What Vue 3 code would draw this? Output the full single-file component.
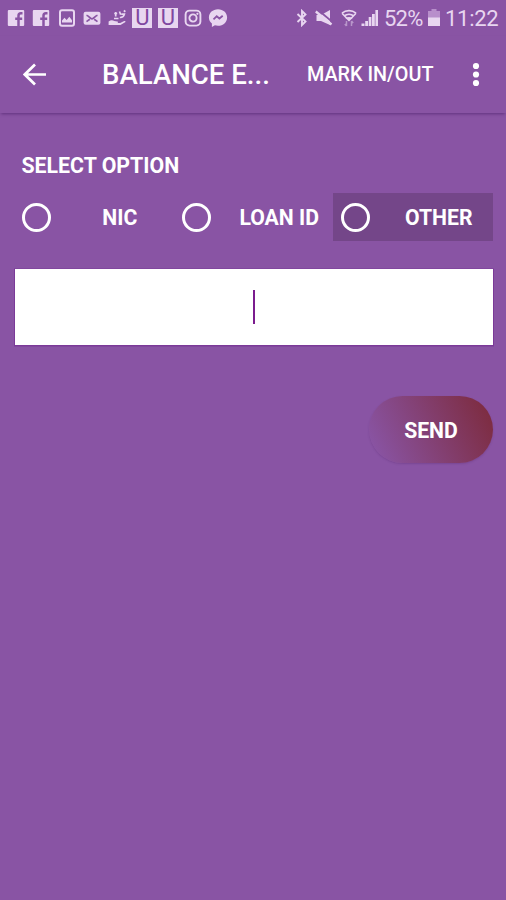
<template>
  <div class="screen">
    <!-- status bar -->
    <div class="status-bar">
      <div class="notifications">
        <svg v-for="n in 2" :key="'fb' + n" class="status-icon" viewBox="0 0 20 20">
          <rect x="1.8" y="2" width="16.4" height="16" rx="1" fill="currentColor" />
          <path class="cut" d="M16.5 5.2H15c-1.900 0-2.500.8-2.500 2.500V18M9.200 10.800h7" stroke-width="2.5" />
        </svg>
        <svg class="status-icon" viewBox="0 0 20 20">
          <rect x="3" y="2.2" width="14" height="15.6" rx="2" class="line" stroke-width="2" />
          <path d="M5 14.500v-2l2.500-2.700 2.200 2.200 2.600-3.200 2.700 3.400v2.300z" fill="currentColor" />
        </svg>
        <svg class="status-icon" viewBox="0 0 20 20">
          <rect x="1.6" y="3.8" width="16.8" height="13" rx="2" fill="currentColor" />
          <path class="cut" d="M4.500 7.200c2.500.8 3.500 3.600 5.500 3.600s3-2.800 5.500-3.600M4.500 13.600l3.300-2.400M15.500 13.600l-3.300-2.400" stroke-width="1.7" />
        </svg>
        <svg class="status-icon" viewBox="0 0 20 20">
          <path d="M1.600 13.500c2.200-1.600 4-1.600 5.600-.4l3.200.4c1 .2.8 1.300-.2 1.400l3 .1 4-1.900c1.200-.5 1.800.5.9 1.200L13.500 17H1.600z" fill="currentColor" />
          <path class="line" d="M7.200 5.500h3M8.700 4v4.500M7 10.500h4.500M12.500 3.500l1.200 3.200M16.800 2.500l1.600 1.200M12.800 9.500c2.500.2 4-1 4.600-3.400h-3" stroke-width="1.7" />
        </svg>
        <span v-for="n in 2" :key="'u' + n" class="u-badge">U</span>
        <svg class="status-icon" viewBox="0 0 20 20">
          <rect x="2.6" y="2.6" width="14.8" height="15" rx="4" class="line" stroke-width="1.9" />
          <circle cx="10" cy="10" r="3.6" class="line" stroke-width="1.9" />
          <circle cx="14.4" cy="5.8" r="1.1" fill="currentColor" />
        </svg>
        <svg class="status-icon" viewBox="0 0 20 20">
          <path d="M10 1.200C4.800 1.200.9 4.800.9 9.400c0 2.500 1.200 4.600 3 6V19l3-1.700c1 .3 2 .4 3.100.4 5.200 0 9.100-3.700 9.100-8.300S15.200 1.200 10 1.200z" fill="currentColor" />
          <path class="cut" d="m5.500 11.300 3.200-3 2.700 2.200 3.300-2.700" stroke-width="1.8" />
        </svg>
      </div>

      <div class="system">
        <svg class="bluetooth" viewBox="0 0 12 18">
          <path class="line" d="m1.500 5 8 7.500L6 16V2l3.500 3.500-8 7.500" stroke-width="1.9" />
        </svg>
        <svg class="mute" viewBox="0 0 18 18">
          <path d="M1.500 6h4.500L15 1v15l-9-4H1.500z" fill="currentColor" />
          <path class="cut" d="M2.500.5 17.500 13" stroke-width="1.8" />
          <path class="line" d="m.8 2.500 15.700 13" stroke-width="2.3" />
        </svg>
        <svg class="wifi" viewBox="0 0 16 18">
          <path class="line" d="M1 4.200C5 .7 11 .7 15 4.200M3.200 7c2.800-2.200 6.800-2.200 9.600 0M1 4.200l5 5.300M15 4.200l-5 5.300" stroke-width="1.6" />
          <path d="m4.500 9 3.500 3.500L11.500 9C9.500 7.800 6.500 7.800 4.500 9z" fill="currentColor" />
          <path class="line faint" d="M5.500 12v5M3.800 15l1.700 2M10.500 17v-5M12.200 14l-1.700-2" stroke-width="1.5" />
        </svg>
        <svg class="signal" viewBox="0 0 18 18">
          <path d="M.5 17v-2.500h3V17zM4.200 17v-5H7v5zM7.700 17V8h2.700v9zM11 17V5h2.800v12zM14.400 17V1H17v16z" fill="currentColor" />
        </svg>
        <span class="percent">52%</span>
        <svg class="battery" viewBox="0 0 12 18">
          <path class="empty" d="M3.500 0h5v2H12v7H0V2h3.500z" />
          <path d="M0 8.500h12V17H0z" fill="currentColor" />
        </svg>
        <span class="clock">11:22</span>
      </div>
    </div>

    <!-- toolbar -->
    <header class="toolbar">
      <button class="back" aria-label="Back">
        <svg viewBox="0 0 24 24">
          <path d="M12 1.500 1.800 11.500 12 21.500M1.800 11.500H23" fill="none" stroke="currentColor" stroke-width="2.7" />
        </svg>
      </button>
      <h1 class="title">BALANCE E...</h1>
      <button class="mark">MARK IN/OUT</button>
      <button class="more" aria-label="More options">
        <svg viewBox="0 0 8 26">
          <circle cx="4" cy="4" r="3.1" />
          <circle cx="4" cy="12.500" r="3.1" />
          <circle cx="4" cy="21" r="3.1" />
        </svg>
      </button>
    </header>

    <main class="content">
      <h2 class="label">SELECT OPTION</h2>
      <div class="options">
        <label
          v-for="option in options"
          :key="option.id"
          class="option"
          :class="{ pressed: option.id === pressed }"
          @click="pressed = option.id"
        >
          <span class="radio"></span>
          <span class="option-text">{{ option.text }}</span>
        </label>
      </div>
      <div class="field"><span class="caret"></span></div>
      <button class="send">SEND</button>
    </main>
  </div>
</template>

<script setup>
import { ref } from 'vue';

const options = [
  { id: 'nic', text: 'NIC' },
  { id: 'loan', text: 'LOAN ID' },
  { id: 'other', text: 'OTHER' }
];

const pressed = ref('other');
</script>

<style>
body {
  background: #8954a4;
}
</style>

<style scoped>
.screen {
  width: 506px;
  height: 900px;
  overflow: hidden;
  background: #8954a4;
  color: #fff;
  font-family: Roboto, "Liberation Sans", sans-serif;
}

button {
  padding: 0;
  border: 0;
  background: none;
  color: inherit;
  font-family: inherit;
}

svg {
  display: block;
  flex: none;
}

.status-bar {
  display: flex;
  justify-content: space-between;
  align-items: center;
  height: 36px;
  padding: 0 8px 0 6px;
  color: #e8d6f0;
}

.notifications {
  display: flex;
  align-items: center;
  gap: 5.3px;
}

.status-icon {
  width: 20px;
  height: 20px;
}

.line {
  fill: none;
  stroke: currentColor;
}

.cut {
  fill: none;
  stroke: #8954a4;
}

.faint {
  opacity: 0.5;
}

.u-badge {
  width: 20px;
  height: 20px;
  background: #e8d6f0;
  color: #8046a0;
  text-align: center;
  font-size: 22px;
  line-height: 20px;
}

.system {
  display: flex;
  align-items: center;
}

.bluetooth {
  width: 12px;
  height: 18px;
  margin-right: 7px;
}

.mute {
  width: 18px;
  height: 18px;
  margin-right: 8px;
}

.wifi {
  width: 16px;
  height: 18px;
  margin-right: 4px;
}

.signal {
  width: 18px;
  height: 18px;
  margin-right: 5px;
}

.percent,
.clock {
  padding-top: 1px;
  font-size: 22px;
  line-height: 36px;
  white-space: nowrap;
}

.percent {
  width: 39px;
  margin-right: 5px;
  letter-spacing: -0.8px;
}

.battery {
  width: 12px;
  height: 18px;
  margin-right: 5px;
}

.empty {
  fill: #b88fcb;
}

.clock {
  width: 53px;
  letter-spacing: -0.3px;
}

.toolbar {
  display: flex;
  align-items: center;
  height: 77px;
  padding: 0 26px 0 23px;
  box-shadow: 0 2px 3px -1px rgba(75, 30, 105, 0.65);
}

.back svg {
  width: 24px;
  height: 24px;
}

.title {
  width: 171px;
  margin: 1px 34px 0 55px;
  font-size: 27.6px;
  font-weight: 500;
  line-height: 32px;
  white-space: nowrap;
}

.mark {
  width: 128px;
  font-size: 19.8px;
  font-weight: 500;
  text-align: left;
  white-space: nowrap;
}

.more {
  margin-left: auto;
}

.more svg {
  width: 8px;
  height: 26px;
  fill: currentColor;
}

.content {
  display: flex;
  flex-direction: column;
  padding: 40px 13px 0 14px;
}

.label {
  margin: 0 0 0 7.5px;
  font-size: 21.3px;
  font-weight: 700;
  line-height: 26px;
}

.options {
  display: grid;
  grid-template-columns: repeat(3, 159.5px);
  height: 48px;
  margin-top: 14px;
}

.option {
  display: flex;
  align-items: center;
  padding-left: 8px;
}

.pressed {
  background: #744689;
}

.radio {
  flex: none;
  box-sizing: border-box;
  width: 29px;
  height: 29px;
  border: 3px solid #fff;
  border-radius: 50%;
}

.option-text {
  flex: 1;
  padding: 1px 0 0 15px;
  text-align: center;
  font-size: 21.2px;
  font-weight: 700;
  white-space: nowrap;
}

.field {
  display: flex;
  align-items: center;
  justify-content: center;
  height: 76px;
  margin: 28px 0 0 1px;
  background: #fff;
  box-shadow: 0 0.5px 0 1px #7b3a98;
}

.caret {
  width: 2px;
  height: 34px;
  background: #7b1c8e;
}

.send {
  align-self: flex-end;
  width: 124px;
  height: 67px;
  margin-top: 51px;
  padding-top: 1px;
  border-radius: 34px;
  background: linear-gradient(65deg, #8954a4 6%, #7d2b3e 96%);
  box-shadow: 0 1px 2px rgba(80, 30, 100, 0.25);
  font-size: 21.2px;
  font-weight: 700;
}
</style>
